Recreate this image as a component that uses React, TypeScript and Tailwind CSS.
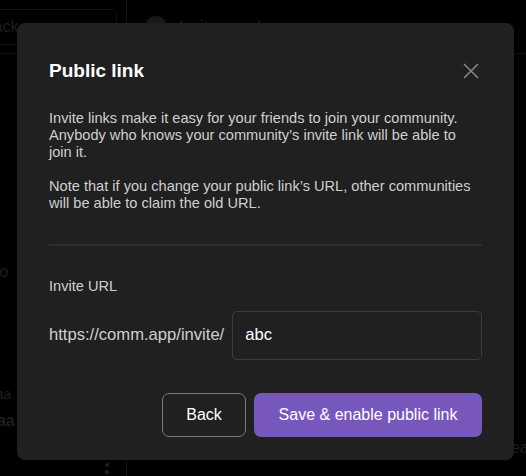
function Backdrop() {
  return (
    <div className="absolute inset-0 flex bg-black text-[#1e1e1e]">
      <div className="w-[127px] border-r border-[#121212] flex flex-col">
        <div className="h-[54px] border-b border-[#121212] flex items-center">
          <div className="ml-[-40px] flex h-[36px] w-[157px] items-center rounded border border-[#121212] px-[22px] text-[16px]">
            Back
          </div>
        </div>
        <div className="mt-[206px] text-[16px] ml-[-46px]">Save to</div>
        <div className="mt-[62px] text-[16px] ml-[-46px]">Name</div>
        <div className="mt-[14px] text-[14px] ml-[-12px]">aaa</div>
        <div className="mt-[4px] text-[16px] font-bold ml-[-12px]">aaa</div>
        <div className="mt-auto mb-[2px] ml-[105px] flex flex-col gap-[3px]">
          <span className="h-[4px] w-[4px] rounded-full bg-[#1e1e1e]" />
          <span className="h-[4px] w-[4px] rounded-full bg-[#1e1e1e]" />
        </div>
      </div>
      <div className="flex-1 flex flex-col">
        <div className="h-[54px] border-b border-[#121212] flex items-center px-[18px] gap-3">
          <span className="h-[22px] w-[22px] rounded-full bg-[#181818]" />
          <span className="text-[16px]">Invite members</span>
        </div>
        <div className="mt-auto mb-[16px] self-end mr-[-8px] text-[16px]">Clear</div>
      </div>
    </div>
  )
}

export default function App() {
  return (
    <div
      className="relative h-[476px] w-[526px] overflow-hidden"
      style={{ fontFamily: '"Liberation Sans", Arial, sans-serif' }}
    >
      <Backdrop />
      <div className="absolute left-[17px] top-[23px] flex w-[497px] flex-col rounded-[8px] bg-[#202020] px-8 pt-[36px] pb-[23px]">
        <div className="flex items-center justify-between">
          <h1 className="text-[19px] font-bold leading-[24px] text-white">Public link</h1>
          <button className="mr-[3px] text-[#8a8a8a]">
            <svg width="16" height="16" viewBox="0 0 16 16" fill="none" stroke="currentColor" strokeWidth="1.5">
              <path d="M1 1L15 15M15 1L1 15" />
            </svg>
          </button>
        </div>

        <div className="mt-[27px] text-[14.6px] leading-[17px] text-[#cfcfcf]">
          <p>
            Invite links make it easy for your friends to join your community. Anybody who knows your
            community’s invite link will be able to join it.
          </p>
          <p className="mt-[17px]">
            Note that if you change your public link’s URL, other communities will be able to claim the old
            URL.
          </p>
        </div>

        <div className="mt-[32px] h-[2px] bg-[#2e2e2e]" />

        <div className="mt-[32px] text-[14.6px] leading-[17px] text-[#cfcfcf]">Invite URL</div>

        <div className="mt-[16px] flex items-center gap-2">
          <span className="text-[16.6px] text-[#cfcfcf]">https://comm.app/invite/</span>
          <div className="flex h-[49px] flex-1 items-center rounded-[5px] border border-[#3c3c3c] px-3 text-[16.6px] text-white">
            abc
          </div>
        </div>

        <div className="mt-[33px] flex justify-end gap-2">
          <button className="h-[44px] w-[84px] rounded-[7px] border border-[#7a7a7a] text-[16px] text-white">
            Back
          </button>
          <button className="h-[44px] w-[228px] rounded-[7px] bg-[#7857bc] text-[16px] text-white">
            Save &amp; enable public link
          </button>
        </div>
      </div>
    </div>
  )
}
